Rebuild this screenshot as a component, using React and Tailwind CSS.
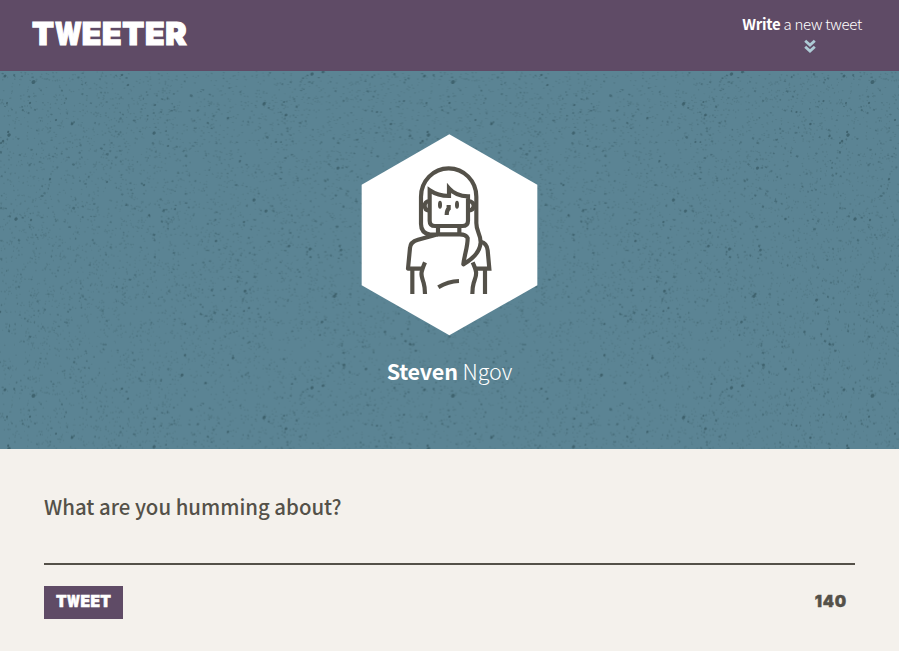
import React from 'react';

const sans = "font-['Noto_Sans_CJK_SC','Noto_Sans',sans-serif]";
const display = "font-['Inter',sans-serif] font-black";

const TILE_W = 419.5;
const TILE_H = 313.7;

// Larger flecks of the repeating tile: x, y, radius
const FLECKS = [
  [33.5, 11, 2.3], [5, 5, 1.7], [9, 64, 2], [3, 70, 1.5], [1, 72, 1.2], [154, 62, 1.9], [72, 53, 1.6], [74, 51, 1], [30, 32, 1.3],
  [264, 33, 1.9], [286, 44, 1.6], [284, 31, 1.1], [128, 14, 1.3], [122, 4, 1.4], [155, 34, 1.2], [7, 32, 1.1],
  [144, 114, 1.3], [149, 144, 1.2], [175, 138, 1.2], [50, 108, 1.3], [254, 129, 1.8], [266, 140, 1.8],
  [216, 170, 1.5], [289, 175, 1.6], [244, 151, 1.3], [16, 148, 2], [31, 149, 1.3], [228, 47, 1.4], [56, 49, 1.2],
  [276, 71, 1.2], [281, 71, 1], [240, 90, 1.2], [107, 111, 1.2], [166, 60, 1], [168, 75, 1.2], [126, 134, 1.1],
  [312, 3, 1.9], [323, 1, 1.6], [404, 30, 1.2], [377, 41, 1.2], [391, 53, 1.4], [372, 40, 0.9],
  [410, 65, 1.4], [8, 61, 1.1], [338, 97, 1.8], [366, 148, 1.5], [310, 178, 1.7], [341, 179, 1.6],
  [334.5, 225, 2], [336, 223, 1.4], [397, 229, 1.7], [227, 239, 1.2], [245, 220, 1.7], [225, 218, 1.3],
  [249, 237, 1.3], [244, 240, 1.2], [322, 251, 1.6], [344, 294, 1.7], [366, 298, 1.5], [312, 317, 1.6],
  [233, 287, 1.6], [228, 294, 1], [185, 284, 1.4], [0, 241, 1.4], [410, 273, 1.4], [182, 304, 1.8],
  [312, 309, 1.1], [324, 315, 1.4], [292, 313, 1.2], [408, 258, 1.1], [185, 253, 1.3], [320, 264, 1.1],
];

function buildTexture() {
  let seed = 20731;
  const rand = () => {
    seed = (seed * 1664525 + 1013904223) % 4294967296;
    return seed / 4294967296;
  };
  const layer = (count, min, max) => {
    let d = '';
    for (let i = 0; i < count; i++) {
      const x = (rand() * TILE_W).toFixed(1);
      const y = (rand() * TILE_H).toFixed(1);
      const w = min + rand() * (max - min);
      const h = min + rand() * (max - min);
      d += `M${x} ${y}l${w.toFixed(1)} ${(h * 0.3).toFixed(1)}l${(-w * 0.4).toFixed(1)} ${h.toFixed(1)}l${(-w).toFixed(1)} ${(-h * 0.5).toFixed(1)}z`;
    }
    return d;
  };
  return { fine: layer(5200, 0.8, 1.8), mid: layer(650, 1.1, 2.2), coarse: layer(80, 1.5, 2.6) };
}

const texture = buildTexture();

function Texture() {
  return (
    <svg className="absolute inset-0 h-full w-full" aria-hidden="true">
      <defs>
        <pattern id="flecks" width={TILE_W} height={TILE_H} patternUnits="userSpaceOnUse">
          <path d={texture.fine} fill="#365a62" opacity="0.26" />
          <path d={texture.mid} fill="#2b4b54" opacity="0.36" />
          <path d={texture.coarse} fill="#2b4b54" opacity="0.45" />
          <g fill="#2b4b54" opacity="0.58">
            {FLECKS.map(([x, y, r]) => (
              <ellipse key={`${x}-${y}`} cx={x} cy={y} rx={r * 0.95} ry={r * 0.8} transform={`rotate(-40 ${x} ${y})`} />
            ))}
          </g>
        </pattern>
      </defs>
      <rect width="100%" height="100%" fill="url(#flecks)" />
    </svg>
  );
}

function Avatar() {
  return (
    <svg className="h-[202px] w-[177px]" viewBox="33 27 531 606" aria-hidden="true">
      <path d="M298 28L562 179V481L298 631L35 481V179Z" fill="#fff" />
      <g fill="none" stroke="#545149" strokeWidth="12.5">
        <path d="M264 329H240Q213 324 213 297V215A83 85 0 0 1 379 215V294C379 322 392 326 392 352C390 380 370 401 340 418C343 390 353 368 353 339Q348 328 329 328H264L204 344Q181 350 180 369L174 431H219" strokeLinejoin="round" />
        <path d="M239 196V287Q239 303 255 303H337Q354 303 354 287V214C332 213 310 205 297 190V213C275 213 255 207 239 196Z" />
        <path d="M264 306V328M328 306V328M238 228Q224 230 224 242Q224 255 238 257M355 228Q371 230 371 242Q371 255 355 257" />
        <path d="M296 240V251Q290 256 290 270" />
        <path d="M392 350Q411 354 413 376L418 431H374M187 431V507M405 431V507" />
        <path d="M225 412C210 447 213 449 221 474Q225 487 225 507M368 412C384 447 379 449 371 474Q367 487 367 507" />
        <path d="M265 487Q294 469 327 468" />
      </g>
      <ellipse cx="270" cy="239" rx="6" ry="12" fill="#545149" />
      <ellipse cx="321" cy="239" rx="6" ry="12" fill="#545149" />
    </svg>
  );
}

export default function App() {
  return (
    <div className={`flex h-[651px] w-full flex-col overflow-hidden bg-[#f4f1ec] text-[#545149] ${sans}`}>
      <nav className="flex h-[71px] shrink-0 items-start justify-between bg-[#5f4b66] pr-[37px] pl-8 text-white">
        <h1 className={`w-[156px] text-[32px] leading-[68px] tracking-[0.7px] whitespace-nowrap [-webkit-text-stroke:1.2px_white] ${display}`}>
          T<span className="inline-block w-[27px] origin-left scale-x-[0.77]">W</span>EETER
        </h1>
        <div className="flex flex-col items-center pt-[13px]">
          <p className="text-[15px] leading-[22px] font-light tracking-[-0.27px] whitespace-nowrap">
            <span className="font-bold">Write</span> a new tweet
          </p>
          <svg className="mt-1 ml-[15px] h-[14px] w-3" viewBox="0 0 12 14" fill="none" stroke="#aecbd6" strokeWidth="2.8" aria-hidden="true">
            <path d="M1.2 1.7L6 6.1L10.8 1.7M1.2 7.7L6 12.1L10.8 7.7" />
          </svg>
        </div>
      </nav>

      <header className="relative flex h-[378px] shrink-0 flex-col items-center bg-[#5b8494] pt-[63px] text-white">
        <Texture />
        <div className="relative flex flex-col items-center">
          <Avatar />
          <h2 className="mt-[19px] text-[21.5px] leading-8 font-light whitespace-nowrap">
            <span className="font-bold tracking-[-0.2px]">Steven</span> Ngov
          </h2>
        </div>
      </header>

      <main className="flex flex-col pt-[41px] pr-11 pl-11">
        <label className="text-[20.4px] leading-8 font-medium">What are you humming about?</label>
        <div className="mt-[41px] h-0.5 bg-[#545149]" />
        <div className="mt-[21px] flex items-center justify-between pr-[9px]">
          <button className="flex h-[33px] w-[79px] items-center bg-[#5f4b66] pb-0.5 pl-3 text-white">
            <span className={`text-[15.5px] leading-[30px] tracking-[0.4px] whitespace-nowrap [-webkit-text-stroke:0.6px_white] ${display}`}>
              T<span className="inline-block w-[13.5px] origin-left scale-x-[0.77]">W</span>EET
            </span>
          </button>
          <output className={`-mt-1 -mr-px text-[16px] leading-8 tracking-[0.8px] [-webkit-text-stroke:0.4px_#545149] ${display}`}>
            140
          </output>
        </div>
      </main>
    </div>
  );
}
